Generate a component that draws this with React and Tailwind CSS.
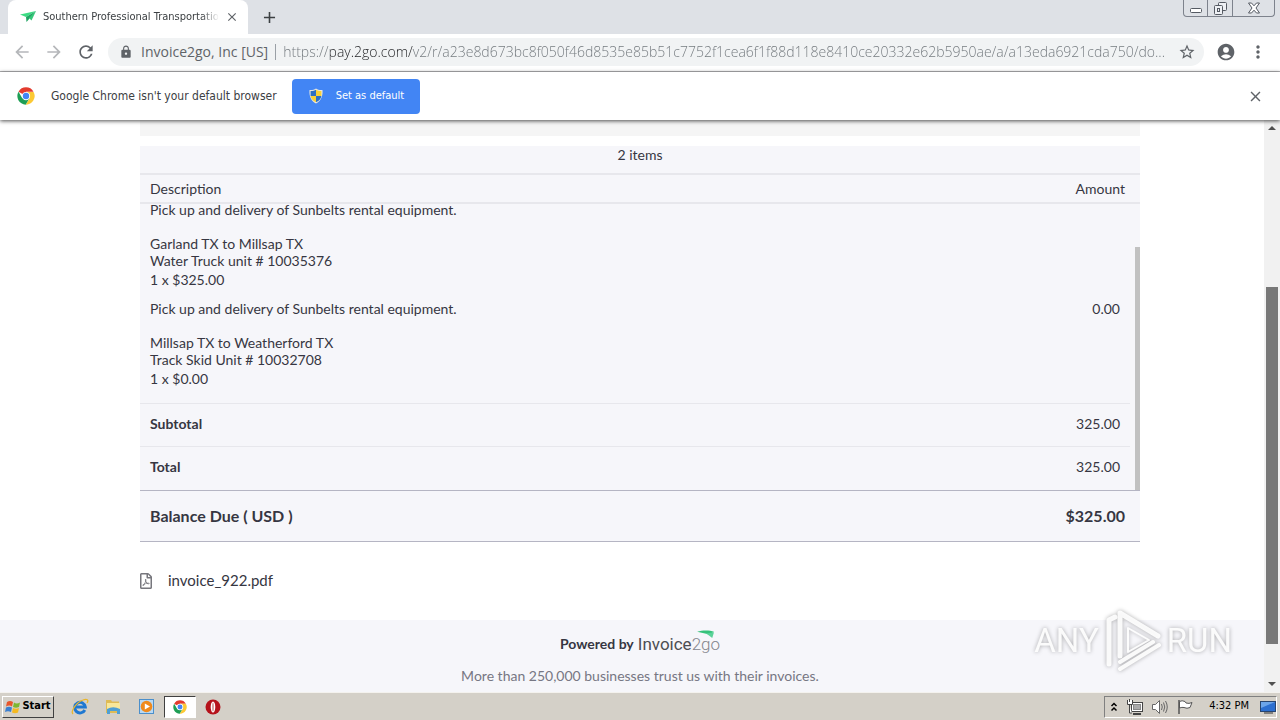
import { MdArrowBack, MdArrowForward, MdRefresh, MdLock, MdStarBorder, MdAccountCircle, MdMoreVert, MdClose, MdAdd } from "react-icons/md";
import { FaRegFilePdf } from "react-icons/fa";

const PAGE_URL =
  "https://pay.2go.com/v2/r/a23e8d673bc8f050f46d8535e85b51c7752f1cea6f1f88d118e8410ce20332e62b5950ae/a/a13eda6921cda750/do...";

const ITEMS = [
  {
    id: 1,
    lines: ["Pick up and delivery of Sunbelts rental equipment.", "", "Garland TX to Millsap TX", "Water Truck unit # 10035376"],
    qty: "1 x $325.00",
    amount: "",
  },
  {
    id: 2,
    lines: ["Pick up and delivery of Sunbelts rental equipment.", "", "Millsap TX to Weatherford TX", "Track Skid Unit # 10032708"],
    qty: "1 x $0.00",
    amount: "0.00",
  },
];

const TOTALS = [
  { label: "Subtotal", amount: "325.00" },
  { label: "Total", amount: "325.00" },
];

const ChromeLogo = ({ className }) => (
  <svg viewBox="0 0 48 48" className={className} aria-hidden="true">
    <path d="M24 24 L4 12.5 A23 23 0 0 1 44 12.5 L24 12.5Z" fill="#e33b2e" />
    <path d="M24 13 H44.2 A23 23 0 0 1 23 47 L34 30Z" fill="#fcc934" />
    <path d="M14 30 L4 12.5 A23 23 0 0 0 23 47 L33.5 29.5Z" fill="#1e9e55" />
    <circle cx="24" cy="24" r="11" fill="#fff" />
    <circle cx="24" cy="24" r="8.5" fill="#4285f4" />
  </svg>
);

const PlaneIcon = () => (
  <svg viewBox="0 0 16 12" className="h-3 w-4 shrink-0" aria-hidden="true">
    <path d="M0 3.5 L16 0 L6 6Z" fill="#3ddc84" />
    <path d="M16 0 L6 6 L6.5 11Z" fill="#1fa463" />
    <path d="M16 0 L9 7 L11.5 9.5Z" fill="#35c878" />
  </svg>
);

const ShieldIcon = () => (
  <svg viewBox="0 0 16 16" className="size-4" aria-hidden="true">
    <path d="M8 0.5 C6 2 3.5 2.3 1.5 2 C1 8 3 13 8 15.5 C13 13 15 8 14.5 2 C12.5 2.3 10 2 8 .5Z" fill="#e8e8e0" />
    <path d="M8 1.8 C6.5 2.8 4.5 3.2 2.6 3.1 L2.6 8 H8Z" fill="#2c6fc4" />
    <path d="M8 1.8 C9.5 2.8 11.5 3.2 13.4 3.1 L13.4 8 H8Z" fill="#f7d038" />
    <path d="M2.6 8 H8 V14.3 C4.5 12.5 3 10.5 2.6 8Z" fill="#f7d038" />
    <path d="M13.4 8 H8 V14.3 C11.5 12.5 13 10.5 13.4 8Z" fill="#2c6fc4" />
  </svg>
);

const WindowControls = () => (
  <div className="mr-[5px] flex h-[17px] overflow-hidden rounded-b border border-t-0 border-[#7d828c] text-[#555a63]">
    <button aria-label="Minimize" className="flex w-6 items-center justify-center border-r border-[#7d828c]">
      <svg viewBox="0 0 12 12" className="size-3" fill="#fff" stroke="currentColor">
        <rect x="0.5" y="6.5" width="11" height="4" rx="1" />
      </svg>
    </button>
    <button aria-label="Restore" className="flex w-[25px] items-center justify-center border-r border-[#7d828c]">
      <svg viewBox="0 0 13 13" className="size-[13px]" fill="#eef0f4" stroke="currentColor">
        <rect x="4.5" y="0.5" width="8" height="8" rx="1" />
        <rect x="0.5" y="3.5" width="8" height="9" rx="1" />
        <rect x="3.5" y="6.5" width="2" height="3" />
      </svg>
    </button>
    <button aria-label="Close window" className="flex w-[41px] items-center justify-center">
      <svg viewBox="0 0 12 12" className="size-3" fill="#fff" stroke="currentColor">
        <path d="M0.5 1 H3.5 L6 3.8 L8.5 1 H11.5 L8 6 L11.5 11 H8.5 L6 8.2 L3.5 11 H0.5 L4 6Z" />
      </svg>
    </button>
  </div>
);

const TabStrip = () => (
  <div className="flex h-[34px] shrink-0 items-start bg-[#dee1e6]">
    <div className="ml-2 flex h-[34px] w-60 items-center rounded-t-lg bg-white pr-[9px] pl-3">
      <PlaneIcon />
      <span className="ml-[7px] mask-r-from-90% font-['DejaVu_Sans_Condensed','Noto_Sans',sans-serif] text-[11px] whitespace-nowrap text-[#3c4043]">
        Southern Professional Transportatio
      </span>
      <button aria-label="Close tab" className="ml-auto text-[#5f6368]"><MdClose size={14} /></button>
    </div>
    <button aria-label="New tab" className="mt-2 ml-3 text-[#3c4043]"><MdAdd size={19} /></button>
    <div className="ml-auto"><WindowControls /></div>
  </div>
);

const Toolbar = () => (
  <div className="flex h-[38px] shrink-0 items-center border-b border-[#b4b4b6] bg-white pb-0.5 text-[#5f6368]">
    <button aria-label="Back" className="ml-3 text-[#b5b7ba]"><MdArrowBack size={20} /></button>
    <button aria-label="Forward" className="ml-3 text-[#b5b7ba]"><MdArrowForward size={20} /></button>
    <button aria-label="Reload" className="ml-3"><MdRefresh size={20} /></button>
    <div className="ml-3 flex h-7 min-w-0 flex-1 items-center rounded-full bg-[#f1f3f4] px-2 font-['Open_Sans','Noto_Sans',sans-serif] text-[14px]">
      <MdLock size={14} className="mr-2 ml-[3px] shrink-0" />
      <span className="whitespace-nowrap">Invoice2go, Inc [US]</span>
      <span className="mx-[7px] h-4 w-px bg-[#9aa0a6]" />
      <input
        aria-label="Address"
        readOnly
        value={PAGE_URL}
        className="min-w-0 flex-1 bg-[linear-gradient(90deg,#70767b_47px,#202124_47px,#202124_130px,#70767b_130px)] bg-clip-text font-light text-transparent outline-none"
      />
      <button aria-label="Bookmark"><MdStarBorder size={18} /></button>
    </div>
    <button aria-label="Profile" className="ml-3"><MdAccountCircle size={20} /></button>
    <button aria-label="Menu" className="mr-3 ml-3"><MdMoreVert size={20} /></button>
  </div>
);

const InfoBar = () => (
  <div className="relative z-10 flex h-12 shrink-0 items-center bg-white font-['DejaVu_Sans_Condensed','Noto_Sans',sans-serif] text-[12px] text-[#3c4043] shadow-[0_1px_4px_rgba(0,0,0,0.7)]">
    <ChromeLogo className="ml-[17px] size-[18px]" />
    <span className="ml-4">Google Chrome isn't your default browser</span>
    <button className="ml-[15px] flex h-[35px] items-center gap-3 rounded bg-[#4285f4] px-4 text-[11px] text-white">
      <ShieldIcon />
      Set as default
    </button>
    <button aria-label="Dismiss" className="mr-4 ml-auto text-[#5f6368]"><MdClose size={17} /></button>
  </div>
);

const Invoice2goLogo = () => (
  <span className="relative font-[Roboto,sans-serif] text-[17px] leading-5 font-normal text-[#4c4d52]">
    Invoice<span className="font-light text-[#85868d]">2go</span>
    <svg viewBox="0 0 20 9" className="absolute -top-1 right-1 h-2 w-5" aria-hidden="true">
      <path d="M0 2 C6 0 14 0 19 2 L14 5Z" fill="#35c27a" />
      <path d="M10 4 L19 2.5 L17 9 L13 6Z" fill="#5ad298" />
    </svg>
  </span>
);

const Invoice = () => (
  <main className="mx-auto w-full max-w-[1000px]">
    <div className="h-4 bg-[#f5f5f5]" />
    <section className="mt-[10px] border-b border-[#b5b5c3] bg-[#f6f6fa]">
      <h2 className="h-[27px] text-center leading-[18px]">2 items</h2>
      <div className="flex h-[31px] items-center justify-between border-y-2 border-[#e7e7ec] pr-[15px] pl-[10px]">
        <span>Description</span>
        <span>Amount</span>
      </div>
      <div className="relative border-b border-[#b5b5c3] pr-[10px]">
        <table className="w-full">
          <tbody className="[&>tr:last-child>td]:pb-4">
            {ITEMS.map((item) => (
              <tr key={item.id} className="align-top">
                <td className="pb-[15px] pl-[10px]">
                  {item.lines.map((line, i) => (
                    <p key={i} className="h-[17px] leading-3">{line}</p>
                  ))}
                  <p className="leading-4">{item.qty}</p>
                </td>
                <td className="pr-[10px] text-right leading-3">{item.amount}</td>
              </tr>
            ))}
          </tbody>
          <tbody>
            {TOTALS.map((row) => (
              <tr key={row.label} className="h-[43px] border-t border-[#e7e7ec]">
                <th scope="row" className="pb-[3px] pl-[10px] text-left font-bold">{row.label}</th>
                <td className="pr-[10px] pb-[3px] text-right">{row.amount}</td>
              </tr>
            ))}
          </tbody>
        </table>
        <div className="absolute right-0 bottom-0 h-[85%] w-[5px] bg-[#c1c1c1]" />
      </div>
      <div className="flex h-[50px] items-center justify-between pr-[15px] pl-[10px] text-[16px] font-bold">
        <span>Balance Due ( USD )</span>
        <span>$325.00</span>
      </div>
    </section>
    <a href="#invoice" className="mt-[29px] mb-[29px] flex h-5 items-center gap-[14px] text-[15px]">
      <FaRegFilePdf size={16} className="-ml-0.5 text-[#77777d]" />
      invoice_922.pdf
    </a>
  </main>
);

// lies over the page's right edge, the page itself is centred on the window
const Scrollbar = () => (
  <div className="absolute inset-y-0 right-0 flex w-4 flex-col items-center bg-[#f1f1f1] py-[6px]">
    <svg viewBox="0 0 8 4" className="h-1 w-2 shrink-0" fill="#505050" aria-hidden="true"><path d="M0 4 L4 0 L8 4Z" /></svg>
    <div className="my-[6px] flex w-3 flex-1 flex-col">
      <div className="grow-[28]" />
      <div className="grow-[66] bg-[#787878]" />
      <div className="grow-[6]" />
    </div>
    <svg viewBox="0 0 8 4" className="h-1 w-2 shrink-0" fill="#505050" aria-hidden="true"><path d="M0 0 L4 4 L8 0Z" /></svg>
  </div>
);

const Watermark = () => (
  <div className="absolute right-12 bottom-[18px] flex items-center gap-1 font-[Roboto,sans-serif] text-[33px] text-white/90 drop-shadow-[0_0_2px_rgba(0,0,0,0.35)]">
    <span>ANY</span>
    <svg viewBox="0 0 60 66" className="h-[66px] w-[60px]" fill="none" stroke="currentColor" strokeWidth="5" strokeLinejoin="round" strokeLinecap="round" aria-hidden="true">
      <path d="M6 56 V12 L12 9" />
      <path d="M17 48 V5 L55 28" />
      <path d="M25 20 V44 L46 32Z" strokeWidth="2" />
      <path d="M17 61 L56 37 M17 54 L50 34" strokeWidth="4" />
    </svg>
    <span>RUN</span>
  </div>
);

const Taskbar = () => (
  <div className="flex h-7 shrink-0 items-center border-t border-[#f4f2ee] bg-[#d4d0c8] font-['DejaVu_Sans_Condensed','Noto_Sans',sans-serif] text-[11px] text-black">
    <button className="ml-[2px] flex h-[22px] w-[52px] items-center justify-center gap-px border border-white border-r-[#404040] border-b-[#404040] font-bold">
      <svg viewBox="0 0 16 16" className="size-4" aria-hidden="true">
        <path d="M2 3 C4 1.5 6 1.5 8 3 L7 7.5 C5 6 3 6.5 1 7.5Z" fill="#e8562a" />
        <path d="M9 3.5 C11 5 13 4.5 15 3.5 L14 8 C12 9 10 9 8 8Z" fill="#7db72f" />
        <path d="M1 8.5 C3 7.5 5 7.5 7 8.5 L6 13 C4 12 2 12 0 13Z" fill="#3a7fd0" />
        <path d="M8 9 C10 10 12 10 14 9 L13 13.5 C11 14.5 9 14.5 7 13.5Z" fill="#f5b921" />
      </svg>
      Start
    </button>
    <button aria-label="Internet Explorer" className="ml-[17px]">
      <svg viewBox="0 0 18 18" className="size-[18px]" fill="none">
        <path d="M13.8 12 A5.3 5.3 0 1 1 14.3 9 H5" stroke="#1f78d1" strokeWidth="3" />
        <path d="M2 16 C-1 13 6 4 12 2 C16 0.5 18 2 16 5" stroke="#e9b62c" strokeWidth="1.3" />
      </svg>
    </button>
    <button aria-label="Explorer" className="ml-[15px]">
      <svg viewBox="0 0 18 18" className="size-[18px]">
        <path d="M2 2 H7 L8 3.500 H15 V15 H2Z" fill="#dfbb55" />
        <path d="M3 5 H16 V12 H3Z" fill="#f8e79a" />
        <path d="M3 16 V11 Q9 7.5 16 11 V16 H13 V13 H6 V16Z" fill="#4f9fd4" />
      </svg>
    </button>
    <button aria-label="Media Player" className="ml-4">
      <svg viewBox="0 0 18 18" className="size-[18px]">
        <rect x="1.5" y="1.5" width="14" height="14" fill="#b9d9f3" stroke="#4b8fcb" />
        <circle cx="8.5" cy="8.5" r="5.8" fill="#f08a1c" />
        <path d="M6.8 5.5 L12 8.5 L6.8 11.5Z" fill="#fff" />
      </svg>
    </button>
    <button aria-label="Chrome" className="ml-2 flex h-[22px] w-8 items-center justify-center border border-[#404040] border-r-white border-b-white bg-white">
      <ChromeLogo className="size-[14px]" />
    </button>
    <button aria-label="Opera" className="ml-2">
      <svg viewBox="0 0 18 18" className="size-[18px]">
        <circle cx="9" cy="9" r="7.5" fill="#b5121b" />
        <ellipse cx="9" cy="9" rx="2.3" ry="5.5" fill="#fff" />
        <ellipse cx="9" cy="9" rx="1" ry="4.5" fill="#d9a0a0" />
      </svg>
    </button>
    <div className="mr-[3px] ml-auto flex h-[22px] items-center border border-[#808080] border-r-white border-b-white">
      <svg viewBox="0 0 8 12" className="mx-[5px] h-3 w-2" fill="none" stroke="#000" strokeWidth="1.5" aria-hidden="true">
        <path d="M1.5 5 L4 2.5 L6.5 5 M1.5 9.5 L4 7 L6.5 9.5" />
      </svg>
      <svg viewBox="0 0 16 16" className="ml-1 size-4" fill="#fff" stroke="#444" aria-hidden="true">
        <rect x="4.5" y="3.5" width="11" height="9" />
        <rect x="6.5" y="5.5" width="7" height="5" fill="#aaa" stroke="#888" />
        <path d="M6 15 H14" strokeWidth="2" />
        <path d="M0.5 1 V5.5 H5.5 V1 M2.5 0 V3 M2.5 6 V14 H5" />
      </svg>
      <svg viewBox="0 0 18 16" className="ml-2 h-4 w-[18px]" fill="#fff" stroke="#666" aria-hidden="true">
        <path d="M1.5 5.5 H4.5 L8.5 1.5 V14.5 L4.5 10.5 H1.5Z" />
        <path d="M10.5 5 Q12 8 10.5 11 M12.5 3.5 Q15 8 12.5 12.5 M14.5 2 Q18 8 14.5 14" fill="none" />
      </svg>
      <svg viewBox="0 0 16 16" className="ml-2 size-4" fill="#fff" stroke="#555" aria-hidden="true">
        <path d="M2 15 V1" strokeWidth="1.5" />
        <path d="M2.5 2.5 Q5 1 8 2.5 L9 4 Q12 5 15 3.5 L13 8.5 Q10 10 7 8.5 Q5 8 2.5 9Z" />
      </svg>
      <time className="mr-[11px] ml-4 whitespace-nowrap">4:32 PM</time>
      <svg viewBox="0 0 16 16" className="size-4" aria-hidden="true">
        <rect x="0.5" y="2.5" width="15" height="10" fill="#2b6fd0" stroke="#27456f" />
        <path d="M1 3 H15 L1 9Z" fill="#6ba5ea" />
        <path d="M4 14 H13" stroke="#666" strokeWidth="1.5" />
      </svg>
    </div>
  </div>
);

const App = () => {
  return (
    <div className="flex h-screen flex-col overflow-hidden bg-white">
      <TabStrip />
      <Toolbar />
      <InfoBar />
      <div className="relative flex min-h-0 flex-1 flex-col font-[Lato,sans-serif] text-[14px] text-[#363642]">
        <Invoice />
        <footer className="flex-1 bg-[#f6f6fa] pt-[14px] text-center">
          <p className="flex h-5 items-center justify-center gap-1 font-bold">
            Powered by <Invoice2goLogo />
          </p>
          <p className="mt-3 leading-5 text-[#777783]">More than 250,000 businesses trust us with their invoices.</p>
        </footer>
        <Scrollbar />
        <Watermark />
      </div>
      <Taskbar />
    </div>
  );
};

export default App;
